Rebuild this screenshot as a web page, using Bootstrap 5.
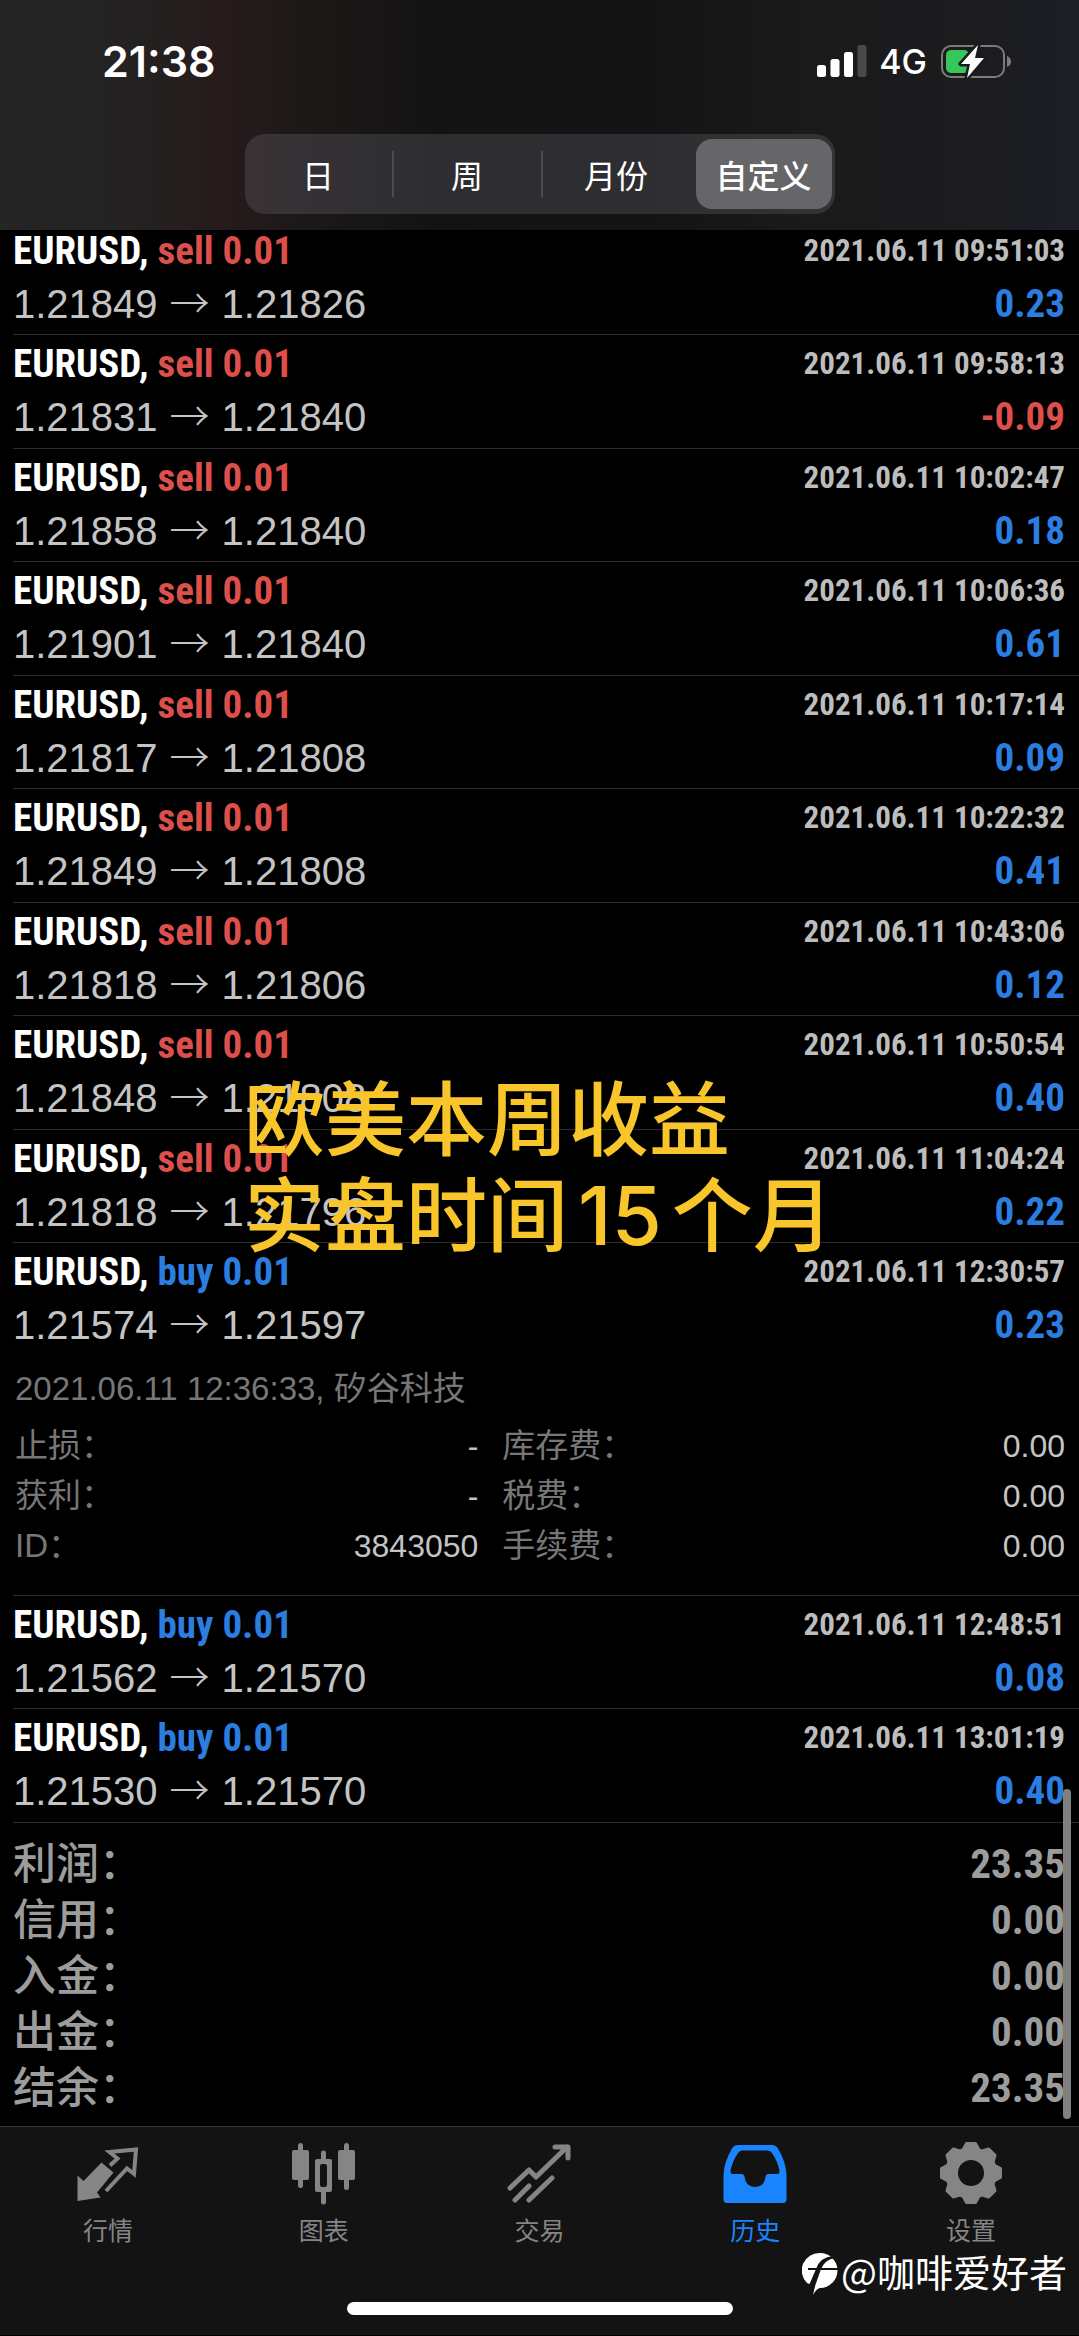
<!DOCTYPE html>
<html lang="zh-CN" data-bs-theme="dark">
<head>
<meta charset="utf-8">
<meta name="viewport" content="width=device-width, initial-scale=1">
<title>历史</title>
<link href="https://cdn.jsdelivr.net/npm/bootstrap@5.3.0/dist/css/bootstrap.min.css" rel="stylesheet">
<style>
  :root { --pos: #2b7de0; --neg: #dc4f4b; --line: #2b2b2b; --tint: #1a84ff; }
  body { background: #000; color: #c4c4c4; font-family: "Liberation Sans", "Noto Sans CJK SC", sans-serif; }
  .narrow { font-family: "Roboto Condensed", "Liberation Sans", sans-serif; font-weight: 700; }
  .cjk { font-family: "Noto Sans CJK SC", sans-serif; }

  .top-area { z-index: 2; height: 230px; background: linear-gradient(90deg, #252525 0, #242222 12%, #271b1c 20%, #1c1818 29%, #141313 40%, #141415 60%, #1a1a1b 75%, #1c1c1f 90%, #1c1e26 100%); }
  .status { height: 122px; padding: 0 68px 0 102px; font-family: Inter, sans-serif; color: #fff; }
  .clock { font-size: 43px; font-weight: 600; }
  .carrier { margin: 0 14px 0 12px; font-size: 34px; font-weight: 500; }

  .segments { width: 590px; height: 80px; margin-top: 12px; padding: 4px 3px 4px 0; border-radius: 20px; background: rgba(118, 118, 128, .27); }
  .segments .btn { flex: 1 1 0; padding: 0; border: 0; border-radius: 16px; color: #fff; font-size: 32px; line-height: 70px; }
  .segments .btn.active { flex: 0 0 136px; margin-left: 6px; background: #666669; color: #fff; font-weight: 500; }
  .segments .rule { width: 2px; height: 46px; background: #4c4c50; }

  .deal { margin-left: 13px; padding: 3px 14px 3px 0; border-bottom: 1px solid var(--line); }
  .deal:nth-child(even) { padding-bottom: 4px; }
  .deal:first-child { margin-top: -8px; }
  .deal.open { padding-bottom: 0; }
  .deal-head { height: 52px; font-size: 39px; line-height: 52px; }
  .deal-head time { font-size: 31px; color: #bdbdbd; }
  .deal-body { height: 54px; font-size: 40px; line-height: 54px; }
  .deal-body .result { font-size: 39px; }
  .arrow { display: inline-block; width: 64px; text-align: center; font-family: "Noto Sans CJK SC", sans-serif; font-weight: 300; line-height: 1; }
  .pos { color: var(--pos); } .neg { color: var(--neg); }

  .extra { padding: 9px 0 24px 2px; font-size: 33px; color: #777; }
  .extra .note-line { line-height: 56px; margin-bottom: 4px; }
  .extra dl { display: grid; grid-template-columns: 14fr 17fr; column-gap: 24px; margin: 0; }
  .extra dl > div { height: 50px; line-height: 50px; }
  .extra dt, .totals dt { font-weight: inherit; }
  .extra dd { margin: 0; font-size: 32px; color: #c4c4c4; }

  .totals { margin: 0; padding: 9px 14px 14px 13px; color: #9c9c9c; }
  .totals > div { height: 56px; line-height: 56px; }
  .totals dt { font-size: 43px; font-weight: 500; }
  .totals dd { margin: 0; font-size: 41px; line-height: 64px; }

  .scroll-thumb { right: 8px; bottom: 7px; width: 8px; height: 330px; border-radius: 4px; background: #808080; }
  .caption-text { left: 244px; top: 844px; font-size: 81px; line-height: 96px; font-weight: 500; color: #f8c52a; }
  .caption-text span { margin: 0 10px; font-family: Inter, sans-serif; }

  .bottom-area { background: #131313; border-top: 1px solid #383838; padding-bottom: 20px; }
  .tabs a { padding-top: 14px; font-size: 25px; line-height: 30px; color: #858585; text-decoration: none; }
  .tabs a.active { color: var(--tint); }
  .tabs svg { width: 64px; height: 64px; margin-bottom: 9px; }
  .home-bar { width: 386px; height: 13px; margin-top: 58px; border-radius: 7px; background: #fff; }
  .sign { right: 12px; bottom: 38px; font-size: 38px; line-height: 52px; color: #fff; gap: 3px; }
  .sign svg { margin-top: 6px; }
</style>
</head>
<body>
<header class="top-area position-relative">
  <div class="status d-flex justify-content-between align-items-center">
    <span class="clock">21:38</span>
    <div class="d-flex align-items-center">
      <svg width="50" height="32" viewBox="0 0 50 32" fill="#fff" aria-hidden="true"><rect x="0" y="20" width="9" height="12" rx="2.5"/><rect x="13.500" y="14" width="9" height="18" rx="2.500"/><rect x="27" y="7" width="9" height="25" rx="2.500"/><rect x="40.500" y="0" width="9" height="32" rx="2.500" fill="#4a4a4a"/></svg>
      <span class="carrier">4G</span>
      <svg width="70" height="38" viewBox="0 0 70 38" aria-hidden="true"><rect x="1" y="4" width="62" height="31" rx="9" fill="none" stroke="#7c7c7c" stroke-width="2"/><path d="M66 14q4 1.500 4 5.500t-4 5.500z" fill="#7c7c7c"/><rect x="5" y="8" width="23" height="23" rx="5" fill="#35c759"/><path d="M37 3 20 22h9l-3 14 17-20h-9z" fill="#fff" stroke="#1a1a1b" stroke-width="5" stroke-linejoin="round" paint-order="stroke"/></svg>
    </div>
  </div>
  <div class="segments cjk d-flex align-items-center mx-auto" role="group" aria-label="时间范围">
    <button type="button" class="btn">日</button><span class="rule"></span>
    <button type="button" class="btn">周</button><span class="rule"></span>
    <button type="button" class="btn">月份</button>
    <button type="button" class="btn active" aria-pressed="true">自定义</button>
  </div>
</header>

<main class="position-relative">
  <div id="deals"></div>

  <dl class="totals">
    <div class="d-flex justify-content-between"><dt class="cjk">利润：</dt><dd class="narrow">23.35</dd></div>
    <div class="d-flex justify-content-between"><dt class="cjk">信用：</dt><dd class="narrow">0.00</dd></div>
    <div class="d-flex justify-content-between"><dt class="cjk">入金：</dt><dd class="narrow">0.00</dd></div>
    <div class="d-flex justify-content-between"><dt class="cjk">出金：</dt><dd class="narrow">0.00</dd></div>
    <div class="d-flex justify-content-between"><dt class="cjk">结余：</dt><dd class="narrow">23.35</dd></div>
  </dl>
  <div class="scroll-thumb position-absolute"></div>
  <div class="caption-text cjk position-absolute text-nowrap">欧美本周收益<br>实盘时间<span>15</span>个月</div>
</main>

<footer class="bottom-area position-relative">
  <nav class="tabs cjk d-flex">
    <a href="#" class="col d-flex flex-column align-items-center">
      <svg viewBox="0 0 64 64" aria-hidden="true"><path fill="currentColor" d="M1.500 34.500 7.500 40 25.500 21.500 37.500 31.500 21 51.500 24.500 56.500 1.500 60z"/><path fill="none" stroke="currentColor" stroke-width="4" d="M34 24.500 41.500 17.500 33.500 11 60 8.500 58 33 51 27.500 30 50"/></svg>行情</a>
    <a href="#" class="col d-flex flex-column align-items-center">
      <svg viewBox="0 0 64 64" fill="currentColor" aria-hidden="true"><rect x="0" y="9" width="17" height="30" rx="2"/><rect x="6" y="2" width="5" height="45" rx="2.500"/><rect x="46" y="9" width="17" height="30" rx="2"/><rect x="52" y="2" width="5" height="47" rx="2.500"/><path fill-rule="evenodd" d="M25 18h4v-6q0-2.500 2.500-2.500T34 12v6h4q2 0 2 2v29q0 2-2 2h-4v10q0 2.500-2.500 2.500T29 61V51h-4q-2 0-2-2V20q0-2 2-2zM30 23q-2 0-2 2v19q0 2 2 2h3q2 0 2-2V25q0-2-2-2z"/></svg>图表</a>
    <a href="#" class="col d-flex flex-column align-items-center">
      <svg viewBox="0 0 64 64" fill="none" stroke="currentColor" stroke-width="5" stroke-linecap="round" stroke-linejoin="round" aria-hidden="true"><path d="M3 47 22 29 29 36 60 6M48 6H61V17M8 59 22 45M22 59 45 37"/></svg>交易</a>
    <a href="#" class="active col d-flex flex-column align-items-center" aria-current="page">
      <svg viewBox="0 0 64 64" aria-hidden="true"><path fill="currentColor" fill-rule="evenodd" d="M15 4H49Q53 4 55 7.500 63 21 63.500 34V58Q63.500 62 60 62H4Q.5 62 .5 58V34Q1 21 9 7.500 11 4 15 4zM19 9.500Q16.500 9.500 15 12 9 21 7.500 30 7.500 33 9.500 33H19Q21 33 21.500 35.500 22.500 46 32 46T42.500 35.500Q43 33 45 33H54.500Q56.500 33 56.500 30 55 21 49 12 47.500 9.500 45 9.500z"/></svg>历史</a>
    <a href="#" class="col d-flex flex-column align-items-center">
      <svg viewBox="-32 -32 64 64" fill="currentColor" aria-hidden="true"><circle r="19.500" fill="none" stroke="currentColor" stroke-width="13"/><g stroke="currentColor" stroke-width="3" stroke-linejoin="round"><path id="tooth" d="M-8-23-4.500-29.500H4.500L8-23z"/><use href="#tooth" transform="rotate(45)"/><use href="#tooth" transform="rotate(90)"/><use href="#tooth" transform="rotate(135)"/><use href="#tooth" transform="rotate(180)"/><use href="#tooth" transform="rotate(225)"/><use href="#tooth" transform="rotate(270)"/><use href="#tooth" transform="rotate(315)"/></g></svg>设置</a>
  </nav>
  <div class="home-bar mx-auto"></div>
  <div class="sign cjk position-absolute d-flex align-items-center">
    <svg width="36" height="44" viewBox="0 0 36 44" aria-hidden="true"><path fill="#fff" d="M18 1a17.500 17.500 0 0 1 0 35q-4 1-7 7L13 34 5 31A17.500 17.500 0 0 1 18 1z"/><path fill="#131313" d="M5 38 14 17Q18 5 31 4L32 6Q23 8 19 17L12 37zM6 16H36V18H6z"/></svg>
    <span>@咖啡爱好者</span>
  </div>
</footer>

<script>
  const deals = [
    ["sell", "1.21849", "1.21826", "09:51:03", "0.23"],
    ["sell", "1.21831", "1.21840", "09:58:13", "-0.09"],
    ["sell", "1.21858", "1.21840", "10:02:47", "0.18"],
    ["sell", "1.21901", "1.21840", "10:06:36", "0.61"],
    ["sell", "1.21817", "1.21808", "10:17:14", "0.09"],
    ["sell", "1.21849", "1.21808", "10:22:32", "0.41"],
    ["sell", "1.21818", "1.21806", "10:43:06", "0.12"],
    ["sell", "1.21848", "1.21808", "10:50:54", "0.40"],
    ["sell", "1.21818", "1.21796", "11:04:24", "0.22"],
    ["buy", "1.21574", "1.21597", "12:30:57", "0.23", true],
    ["buy", "1.21562", "1.21570", "12:48:51", "0.08"],
    ["buy", "1.21530", "1.21570", "13:01:19", "0.40"]
  ];
  const cell = (k, v) => `<div class="d-flex justify-content-between"><dt>${k}</dt><dd>${v}</dd></div>`;
  const extra = `<div class="extra"><div class="note-line">2021.06.11 12:36:33, 矽谷科技</div><dl>
    ${cell("止损：", "-")}${cell("库存费：", "0.00")}${cell("获利：", "-")}${cell("税费：", "0.00")}${cell("ID：", "3843050")}${cell("手续费：", "0.00")}</dl></div>`;
  document.getElementById("deals").innerHTML = deals.map(([side, from, to, at, sum, open]) => `
    <article class="deal${open ? " open" : ""}">
      <div class="deal-head narrow d-flex justify-content-between align-items-center">
        <div><span class="text-white">EURUSD,</span> <span class="${side === "buy" ? "pos" : "neg"}">${side} 0.01</span></div>
        <time>2021.06.11 ${at}</time>
      </div>
      <div class="deal-body d-flex justify-content-between align-items-center">
        <div>${from}<span class="arrow">→</span>${to}</div>
        <div class="result narrow ${sum < 0 ? "neg" : "pos"}">${sum}</div>
      </div>${open ? extra : ""}
    </article>`).join("");
</script>
<script src="https://cdn.jsdelivr.net/npm/bootstrap@5.3.0/dist/js/bootstrap.bundle.min.js"></script>
</body>
</html>
